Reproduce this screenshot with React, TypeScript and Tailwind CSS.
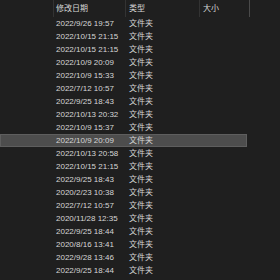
import React from "react";

const rows = [
  "2022/9/26 19:57",
  "2022/10/15 21:15",
  "2022/10/15 21:15",
  "2022/10/9 20:09",
  "2022/10/9 15:33",
  "2022/7/12 10:57",
  "2022/9/25 18:43",
  "2022/10/13 20:32",
  "2022/10/9 15:37",
  "2022/10/9 20:09",
  "2022/10/13 20:58",
  "2022/10/15 21:15",
  "2022/9/25 18:43",
  "2020/2/23 10:38",
  "2022/7/12 10:57",
  "2020/11/28 12:35",
  "2022/9/25 18:44",
  "2020/8/16 13:41",
  "2022/9/28 13:46",
  "2022/9/25 18:44",
];

const SELECTED = 9;

export default function App() {
  return (
    <div
      className="w-[280px] h-[280px] overflow-hidden bg-[#1f1f1f] text-[8px] text-[#d6d6d6]"
      style={{ fontFamily: '"Liberation Sans", "Noto Sans CJK SC", sans-serif' }}
    >
      {/* Header */}
      <div className="grid grid-cols-[53px_72px_74px_50px_1fr] h-[17px] items-center">
        <div />
        <div className="h-full flex items-center pl-[2px] border-l border-[#333]">修改日期</div>
        <div className="h-full flex items-center pl-[3px] border-l border-[#333]">类型</div>
        <div className="h-full flex items-center pl-[3px] border-l border-[#333]">大小</div>
        <div className="h-full border-l border-[#4a4a4a]" />
      </div>

      {/* Rows */}
      <div className="flex flex-col">
        {rows.map((d, i) => (
          <div
            key={i}
            className={
              "grid grid-cols-[53px_72px_74px_48px] w-[247px] h-[13px] items-center " +
              (i === SELECTED ? "bg-[#4d4d4d] outline outline-1 -outline-offset-1 outline-[#5e5e5e]" : "")
            }
          >
            <div />
            <div className="pl-[3px] whitespace-nowrap">{d}</div>
            <div className="pl-[4px]">文件夹</div>
            <div />
          </div>
        ))}
      </div>
    </div>
  );
}
